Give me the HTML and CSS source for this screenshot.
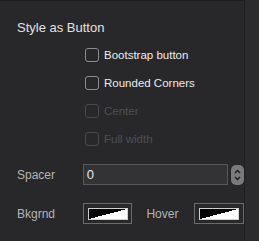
FILE: index.html
```html
<!DOCTYPE html>
<html lang="en">
<head>
    <meta charset="UTF-8">
    <title>Style as Button</title>
    <link rel="stylesheet" href="styles.css">
</head>
<body>
    <div class="panel">
        <div class="title">Style as Button</div>

        <!-- Options -->
        <div class="options">
            <label class="check"><span class="box"></span>Bootstrap button</label>
            <label class="check"><span class="box"></span>Rounded Corners</label>
            <label class="check disabled"><span class="box"></span>Center</label>
            <label class="check disabled"><span class="box"></span>Full width</label>
        </div>

        <!-- Spacer -->
        <div class="row spacer-row">
            <span class="label">Spacer</span>
            <div class="field">0</div>
            <div class="stepper">
                <svg width="13" height="20" viewBox="0 0 13 20">
                    <path d="M4 8 L6.5 5.5 L9 8" fill="none" stroke="#1e1e1e" stroke-width="1.4"/>
                    <path d="M4 12 L6.5 14.5 L9 12" fill="none" stroke="#1e1e1e" stroke-width="1.4"/>
                </svg>
            </div>
        </div>

        <!-- Couleurs -->
        <div class="row colors-row">
            <span class="label">Bkgrnd</span>
            <div class="swatch"><span class="swatch-inner"></span></div>
            <span class="label hover-label">Hover</span>
            <div class="swatch"><span class="swatch-inner"></span></div>
        </div>
    </div>
</body>
</html>
```

FILE: styles.css
```css
body {
    margin: 0;
    background-color: #2b2b2d;
    font-family: 'Liberation Sans', Arial, sans-serif;
    width: 259px;
    height: 241px;
    overflow: hidden;
}

.panel {
    width: 245px;
    height: 241px;
    box-sizing: border-box;
    background-color: #28282a;
    border-top: 1px solid #1e1e1e;
    border-right: 1px solid #1f1f21;
    padding: 19px 0 0 17px;
}

.title {
    color: #e2e2e2;
    font-size: 13px;
    line-height: 16px;
}

.options {
    display: flex;
    flex-direction: column;
    gap: 14px;
    margin: 12px 0 0 68px;
}

.check {
    display: flex;
    align-items: center;
    gap: 5px;
    height: 14px;
    font-size: 11.5px;
    color: #ececec;
}

.box {
    width: 12px;
    height: 12px;
    border: 1px solid #8c8c8c;
    border-radius: 3px;
}

.check.disabled {
    color: #4f4f51;
}

.check.disabled .box {
    border-color: #4a4a4c;
}

.row {
    display: flex;
    align-items: center;
}

.label {
    color: #b4b4b4;
    font-size: 12px;
    width: 66px;
}

.spacer-row {
    margin-top: 18px;
}

.field {
    width: 144px;
    height: 19px;
    border: 1px solid #58585a;
    background-color: #333335;
    color: #e8e8e8;
    font-size: 13px;
    line-height: 19px;
    padding-left: 3px;
    box-sizing: content-box;
    width: 141px;
}

.stepper {
    margin-left: 3px;
    width: 13px;
    height: 20px;
    border-radius: 5px;
    background-color: #7a7a7c;
    display: flex;
}

.colors-row {
    margin-top: 18px;
}

.swatch {
    width: 48px;
    height: 19px;
    border: 1px solid #6a6a6c;
    display: flex;
    align-items: center;
    justify-content: center;
}

.swatch-inner {
    width: 38px;
    height: 10px;
    border: 1px solid #cfcfcf;
    background: linear-gradient(to top left, #ffffff 50%, #000000 50%);
}

.hover-label {
    width: 48px;
    margin-left: 14px;
}
```
